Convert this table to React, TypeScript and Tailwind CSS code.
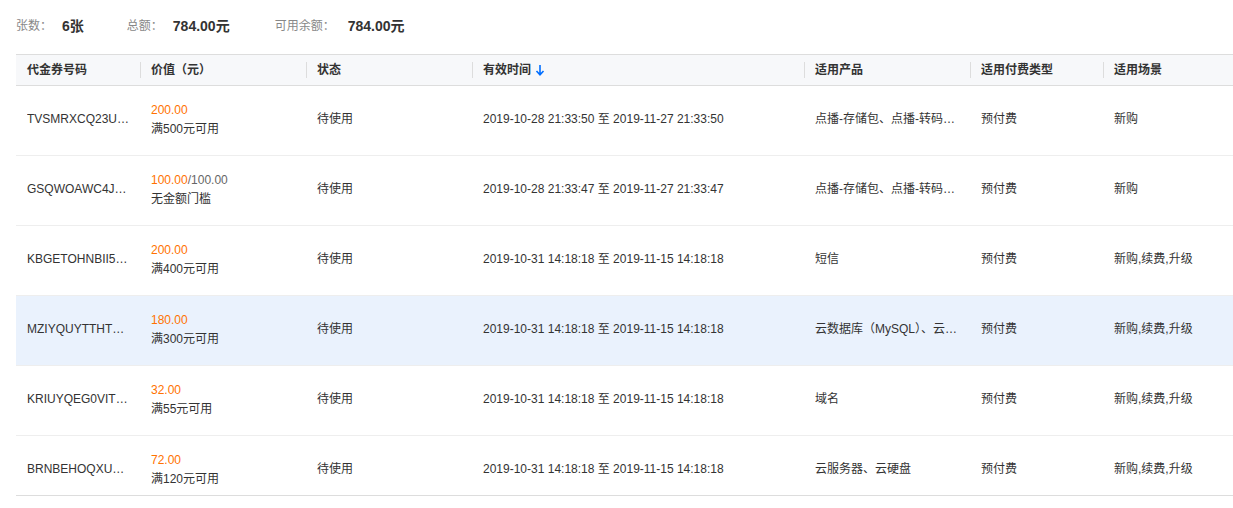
import React from 'react';

interface Voucher {
  code: string;
  amount: string;
  total?: string;
  condition: string;
  status: string;
  start: string;
  end: string;
  product: string;
  payType: string;
  scene: string;
}

const vouchers: Voucher[] = [
  { code: 'TVSMRXCQ23UHZK8P', amount: '200.00', condition: '满500元可用', status: '待使用', start: '2019-10-28 21:33:50', end: '2019-11-27 21:33:50', product: '点播-存储包、点播-转码包、点播-流量包', payType: '预付费', scene: '新购' },
  { code: 'GSQWOAWC4JRX9PLM', amount: '100.00', total: '100.00', condition: '无金额门槛', status: '待使用', start: '2019-10-28 21:33:47', end: '2019-11-27 21:33:47', product: '点播-存储包、点播-转码包、点播-流量包', payType: '预付费', scene: '新购' },
  { code: 'KBGETOHNBII5QWEA', amount: '200.00', condition: '满400元可用', status: '待使用', start: '2019-10-31 14:18:18', end: '2019-11-15 14:18:18', product: '短信', payType: '预付费', scene: '新购,续费,升级' },
  { code: 'MZIYQUYTTHTKLOPA', amount: '180.00', condition: '满300元可用', status: '待使用', start: '2019-10-31 14:18:18', end: '2019-11-15 14:18:18', product: '云数据库（MySQL）、云数据库（Redis）', payType: '预付费', scene: '新购,续费,升级' },
  { code: 'KRIUYQEG0VITXZAB', amount: '32.00', condition: '满55元可用', status: '待使用', start: '2019-10-31 14:18:18', end: '2019-11-15 14:18:18', product: '域名', payType: '预付费', scene: '新购,续费,升级' },
  { code: 'BRNBEHOQXUQWEMNB', amount: '72.00', condition: '满120元可用', status: '待使用', start: '2019-10-31 14:18:18', end: '2019-11-15 14:18:18', product: '云服务器、云硬盘', payType: '预付费', scene: '新购,续费,升级' },
];

const cols = 'grid grid-cols-[124px_166px_166px_332px_166px_133px_1fr]';

function SortDown() {
  return (
    <svg width="10" height="12" viewBox="0 0 10 12" className="ml-[4px]">
      <path d="M5 1v9.5M1.5 7l3.5 3.8L8.5 7" fill="none" stroke="#006eff" strokeWidth="1.6" />
    </svg>
  );
}

function HeadCell({ children, first }: { children: React.ReactNode; first?: boolean }) {
  return (
    <div className="flex items-center h-full">
      {first ? (
        <div className="pl-[11px]">{children}</div>
      ) : (
        <div className="flex items-center border-l border-[#ddd] h-4 pl-[10px]">{children}</div>
      )}
    </div>
  );
}

function Cell({ children, pr = 'pr-[12px]' }: { children: React.ReactNode; pr?: string }) {
  return <div className={`h-[38px] flex items-center pl-[11px] ${pr} min-w-0`}>{children}</div>;
}

export default function App() {
  return (
    <div
      className="bg-white w-full min-h-[508px] pl-4 text-[12px] text-[#333]"
      style={{ fontFamily: '"Liberation Sans", Arial, "Noto Sans CJK SC", sans-serif' }}
    >
      {/* Summary */}
      <div className="flex items-center h-[52px] mb-[2px]">
        <span className="text-[#888]">张数：</span>
        <span className="text-[14px] font-bold ml-[10px] mr-[43px]">6张</span>
        <span className="text-[#888]">总额：</span>
        <span className="text-[14px] font-bold ml-[10px] mr-[45px]">784.00元</span>
        <span className="text-[#888]">可用余额：</span>
        <span className="text-[14px] font-bold ml-[13px]">784.00元</span>
      </div>

      {/* Header */}
      <div className={`${cols} h-[32px] border-y border-[#ddd] bg-[#f7f8fa] font-bold`}>
        <HeadCell first>代金券号码</HeadCell>
        <HeadCell>价值（元）</HeadCell>
        <HeadCell>状态</HeadCell>
        <HeadCell>
          <span>有效时间</span>
          <SortDown />
        </HeadCell>
        <HeadCell>适用产品</HeadCell>
        <HeadCell>适用付费类型</HeadCell>
        <HeadCell>适用场景</HeadCell>
      </div>

      {/* Rows */}
      {vouchers.map((v, i) => {
        const last = i === vouchers.length - 1;
        const hover = i === 3;
        return (
          <div
            key={v.code}
            className={`${cols} items-start pt-[14px] border-b ${last ? 'h-[60px] border-[#ddd]' : 'h-[70px] border-[#eee]'} ${hover ? 'bg-[#eaf2fd]' : ''}`}
          >
            <Cell pr="pr-[8px]">
              <span className="truncate">{v.code}</span>
            </Cell>
            <div className="h-[38px] flex flex-col justify-center pl-[11px] pt-[2px] leading-[19px]">
              <div>
                <span className="text-[#ff7200]">{v.amount}</span>
                {v.total && <span className="text-[#666]">/{v.total}</span>}
              </div>
              <div>{v.condition}</div>
            </div>
            <Cell>{v.status}</Cell>
            <Cell>
              {v.start} 至 {v.end}
            </Cell>
            <Cell>
              <span className="truncate">{v.product}</span>
            </Cell>
            <Cell>{v.payType}</Cell>
            <Cell>{v.scene}</Cell>
          </div>
        );
      })}
    </div>
  );
}
